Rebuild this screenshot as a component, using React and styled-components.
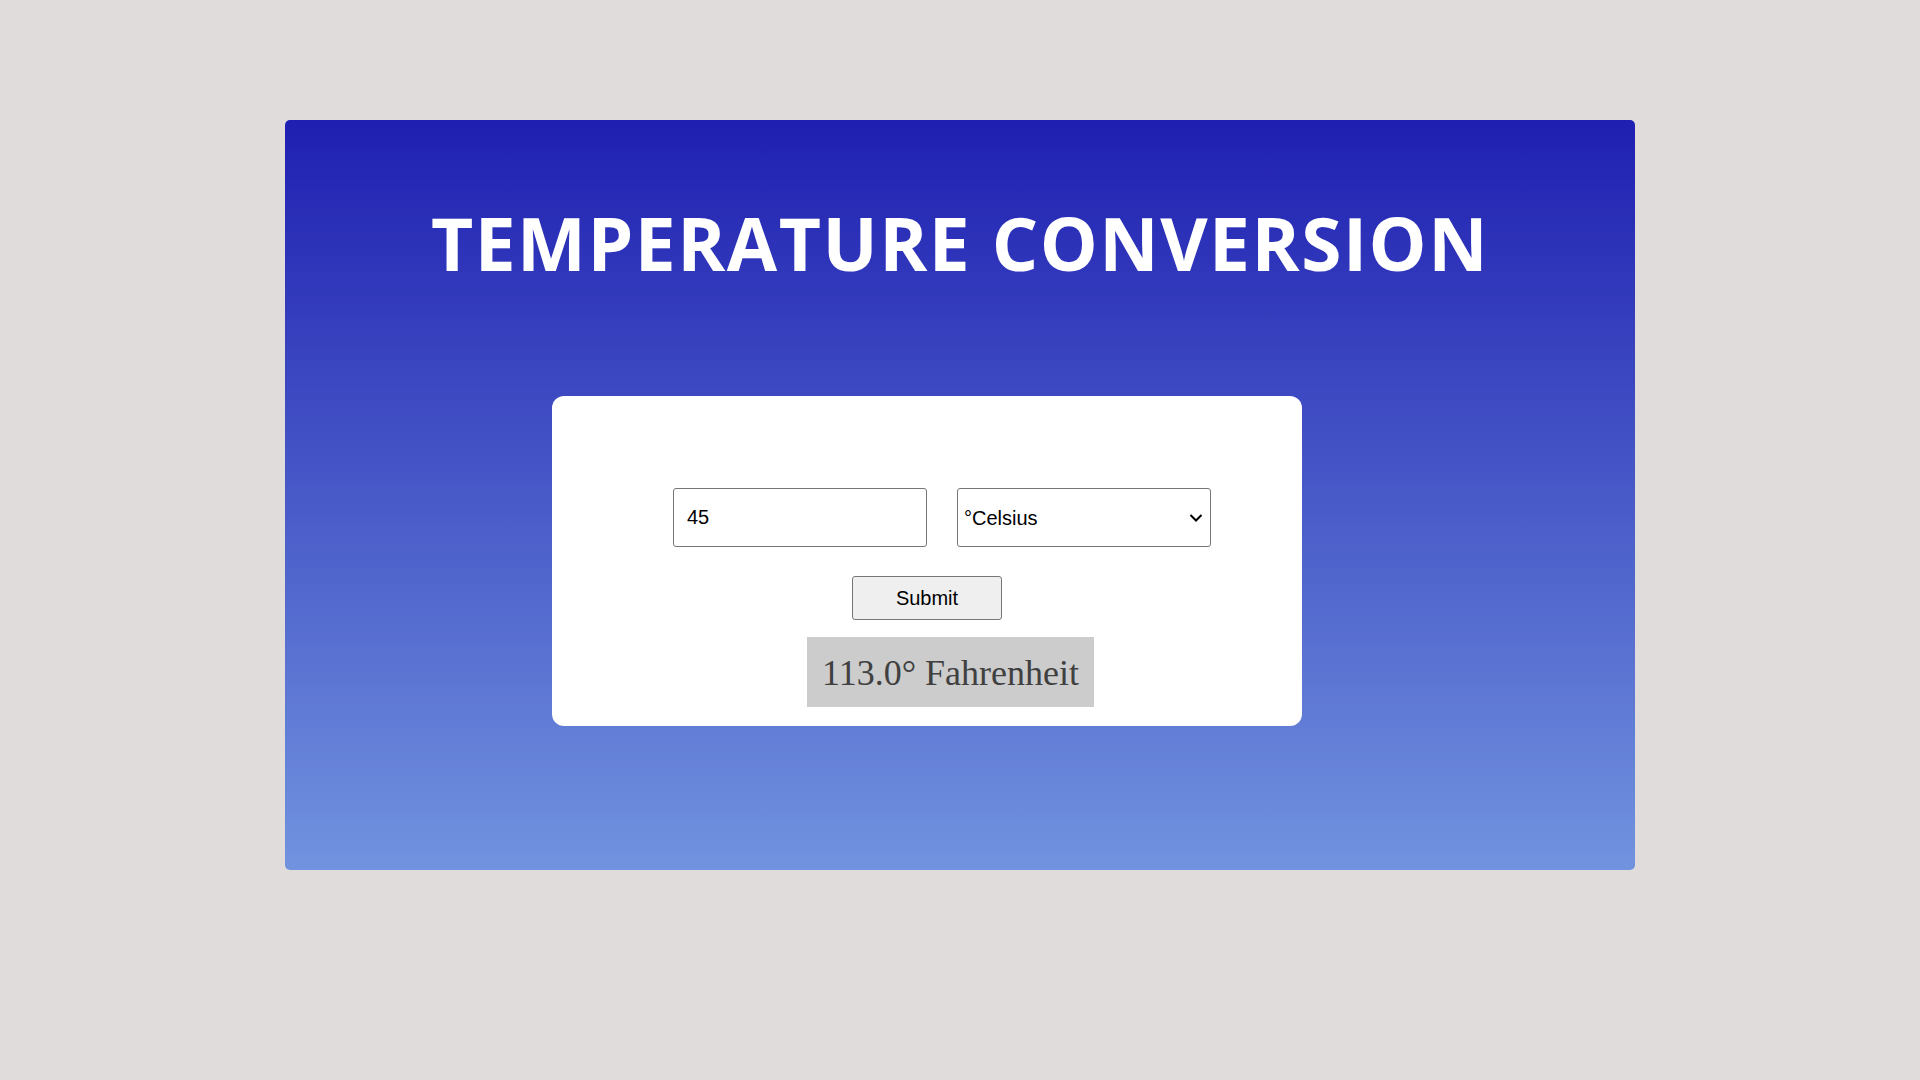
import React, { useState } from "react";
import styled, { createGlobalStyle } from "styled-components";

const GlobalStyle = createGlobalStyle`
  html, body {
    margin: 0;
    padding: 0;
    background: #dfdcdb;
  }
  body {
    font-family: "Liberation Sans", Arial, sans-serif;
  }
`;

const Page = styled.div`
  min-height: 1080px;
  padding-top: 120px;
  box-sizing: border-box;
`;

const Panel = styled.div`
  width: 1350px;
  height: 750px;
  margin: 0 auto;
  border-radius: 5px;
  background: linear-gradient(to bottom, #1f1fb1, #7193df);
  box-sizing: border-box;
  padding-top: 73px;
`;

const Title = styled.h1`
  margin: 0;
  text-align: center;
  color: #fff;
  font-family: "Open Sans", "Segoe UI", sans-serif;
  font-weight: 700;
  font-size: 73px;
  line-height: 99px;
  letter-spacing: 1.5px;
`;

const Card = styled.div`
  width: 750px;
  height: 330px;
  margin: 104px 0 0 267px;
  background: #fff;
  border-radius: 12px;
  box-sizing: border-box;
  padding-top: 92px;
  display: flex;
  flex-direction: column;
`;

const Row = styled.div`
  display: flex;
  gap: 30px;
  padding-left: 121px;
`;

const TextInput = styled.input`
  width: 254px;
  height: 59px;
  box-sizing: border-box;
  border: 1px solid #767676;
  border-radius: 3px;
  padding: 0 13px;
  font-family: "Liberation Sans", Arial, sans-serif;
  font-size: 20px;
  color: #000;
  outline: none;
`;

const SelectWrap = styled.div`
  position: relative;
  width: 254px;
  height: 59px;
`;

const Select = styled.select`
  appearance: none;
  width: 100%;
  height: 100%;
  box-sizing: border-box;
  border: 1px solid #767676;
  border-radius: 3px;
  padding: 0 30px 0 6px;
  background: #fff;
  font-family: "Liberation Sans", Arial, sans-serif;
  font-size: 20px;
  color: #000;
  outline: none;
`;

const Chevron = styled.svg`
  position: absolute;
  right: 8px;
  top: 25px;
  pointer-events: none;
`;

const SubmitButton = styled.button`
  align-self: center;
  width: 150px;
  height: 44px;
  margin-top: 29px;
  background: #efefef;
  border: 1px solid #767676;
  border-radius: 3px;
  font-family: "Liberation Sans", Arial, sans-serif;
  font-size: 20px;
  color: #000;
  cursor: pointer;
`;

const Result = styled.div`
  align-self: flex-start;
  margin: 17px 0 0 255px;
  height: 70px;
  padding: 0 15px;
  background: #cccccc;
  color: #404040;
  font-family: "Liberation Serif", "Times New Roman", serif;
  font-size: 36px;
  line-height: 72px;
  white-space: nowrap;
`;

export default function App() {
  const [value, setValue] = useState("45");
  const [unit, setUnit] = useState("celsius");

  return (
    <>
      <GlobalStyle />
      <Page>
        <Panel>
          <Title>TEMPERATURE CONVERSION</Title>
          <Card>
            <Row>
              <TextInput value={value} onChange={(e) => setValue(e.target.value)} />
              <SelectWrap>
                <Select value={unit} onChange={(e) => setUnit(e.target.value)}>
                  <option value="celsius">°Celsius</option>
                  <option value="fahrenheit">°Fahrenheit</option>
                </Select>
                <Chevron width="14" height="10" viewBox="0 0 14 10">
                  <path d="M1.5 2 L7 7.5 L12.5 2" fill="none" stroke="#000" strokeWidth="2" />
                </Chevron>
              </SelectWrap>
            </Row>
            <SubmitButton>Submit</SubmitButton>
            <Result>113.0° Fahrenheit</Result>
          </Card>
        </Panel>
      </Page>
    </>
  );
}
